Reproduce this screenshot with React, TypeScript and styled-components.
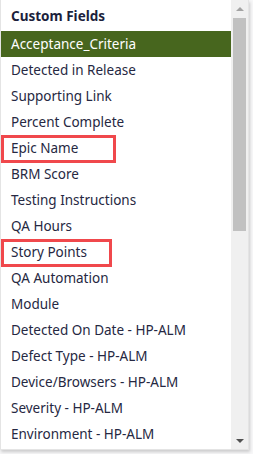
import React from "react";
import styled, { createGlobalStyle } from "styled-components";

const Global = createGlobalStyle`
html,body{margin:0;padding:0;background:#fff;}
body{font-family:"Noto Sans","Open Sans",sans-serif;}
`
const Page = styled.div`
width:253px;
height:454px;
position:relative;
background:#f7f7f8;
overflow:hidden;
`
const Panel = styled.div`
width:249px;
height:450px;
display:flex;
background:#fff;
border:1px solid #e4e4e4;
border-top:none;
box-sizing:border-box;
box-shadow:1px 2px 3px rgba(0,0,0,.18);
`
const ListCol = styled.div`
flex:1;
display:flex;
flex-direction:column;
min-width:0;
`
const Header = styled.div`
height:31px;
display:flex;
align-items:center;
padding-left:10px;
font-weight:700;
font-size:13.5px;
color:#1c1f3c;
`
const Row = styled.div<{active?:boolean}>`
position:relative;
height:26px;
display:flex;
align-items:center;
padding-left:10px;
font-size:13.5px;
white-space:nowrap;
color:${p=>p.active?'#fff':'#262842'};
background:${p=>p.active?'#47661e':'transparent'};
`
const Mark = styled.div<{w:number}>`
position:absolute;
left:0;
top:0;
width:${p=>p.w}px;
height:28px;
border:3px solid #f0484c;
box-sizing:border-box;
`
const Scroll = styled.div`
width:17px;
background:#f0f0f0;
display:flex;
flex-direction:column;
align-items:center;
`
const Arrow = styled.div<{up?:boolean}>`
height:17px;
width:17px;
display:flex;
align-items:center;
justify-content:center;
&::after{
  content:'';
  border-left:4px solid transparent;
  border-right:4px solid transparent;
  ${p=>p.up?'border-bottom:4px solid #a3a3a3;':'border-top:4px solid #505050;'}
}
`
const Thumb = styled.div`
width:13px;
height:213px;
margin-top:1px;
background:#c1c1c1;
`
const Fill = styled.div`flex:1;`

const items:{name:string,mark?:number}[]=[
  {name:"Detected in Release"},
  {name:"Supporting Link"},
  {name:"Percent Complete"},
  {name:"Epic Name",mark:115},
  {name:"BRM Score"},
  {name:"Testing Instructions"},
  {name:"QA Hours"},
  {name:"Story Points",mark:111},
  {name:"QA Automation"},
  {name:"Module"},
  {name:"Detected On Date - HP-ALM"},
  {name:"Defect Type - HP-ALM"},
  {name:"Device/Browsers - HP-ALM"},
  {name:"Severity - HP-ALM"},
  {name:"Environment - HP-ALM"},
]

export default function App(){
  return (
    <Page>
      <Global/>
      <Panel>
        <ListCol>
          <Header>Custom Fields</Header>
          <Row active>Acceptance_Criteria</Row>
          {items.map((it,i)=>
            <Row key={i}>
              {it.mark && <Mark w={it.mark}/>}
              {it.name}
            </Row>
          )}
        </ListCol>
        <Scroll>
          <Arrow up/>
          <Thumb/>
          <Fill/>
          <Arrow/>
        </Scroll>
      </Panel>
    </Page>
  )
}
